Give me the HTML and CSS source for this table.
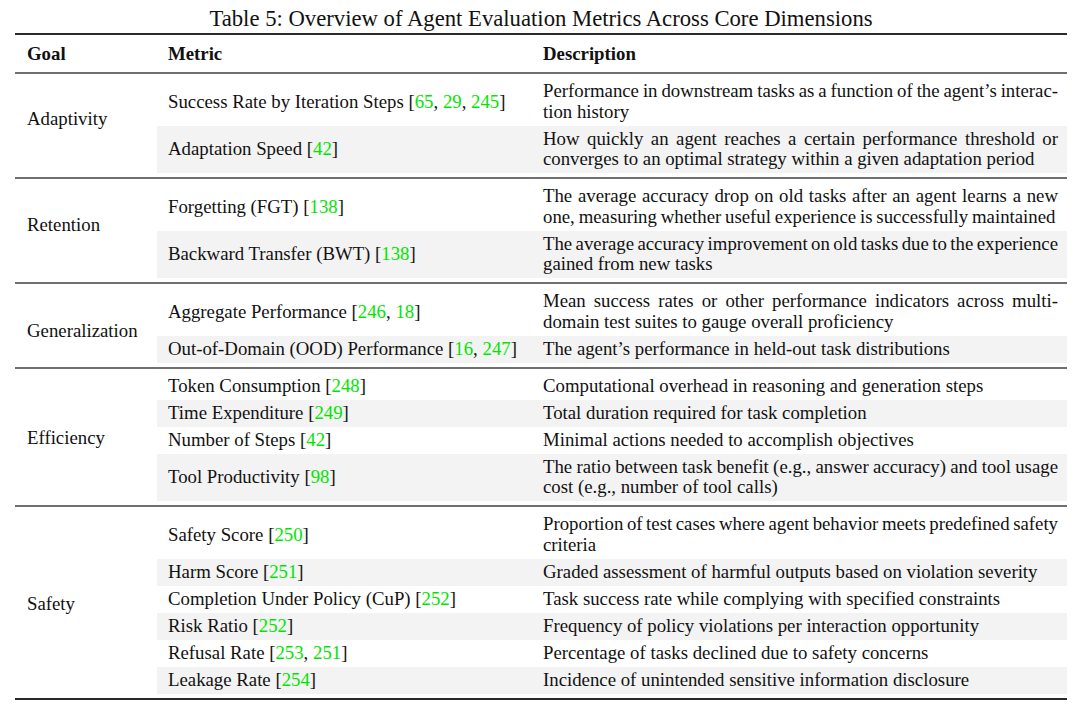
FILE: index.html
```html
<!DOCTYPE html>
<html lang="en">
<head>
<meta charset="utf-8">
<title>Table 5</title>
<link rel="stylesheet" href="styles.css">
</head>
<body>
<div class="page">
  <div class="caption">Table 5: Overview of Agent Evaluation Metrics Across Core Dimensions</div>
  <div class="table">
    <div class="head">
      <div class="goal">Goal</div>
      <div class="metric">Metric</div>
      <div class="desc">Description</div>
    </div>

    <div class="group">
      <div class="goal up7">Adaptivity</div>
      <div class="rows">
        <div class="r"><div class="metric">Success Rate by Iteration Steps [<span class="cite">65</span>, <span class="cite">29</span>, <span class="cite">245</span>]</div><div class="desc"><span class="j">Performance in downstream tasks as a function of the agent’s interac-</span>tion history</div></div>
        <div class="r alt"><div class="metric">Adaptation Speed [<span class="cite">42</span>]</div><div class="desc"><span class="j">How quickly an agent reaches a certain performance threshold or</span>converges to an optimal strategy within a given adaptation period</div></div>
      </div>
    </div>

    <div class="group">
      <div class="goal up6">Retention</div>
      <div class="rows">
        <div class="r"><div class="metric">Forgetting (FGT) [<span class="cite">138</span>]</div><div class="desc"><span class="j">The average accuracy drop on old tasks after an agent learns a new</span><span class="tight">one, measuring whether useful experience is successfully maintained</span></div></div>
        <div class="r alt"><div class="metric">Backward Transfer (BWT) [<span class="cite">138</span>]</div><div class="desc"><span class="j">The average accuracy improvement on old tasks due to the experience</span>gained from new tasks</div></div>
      </div>
    </div>

    <div class="group">
      <div class="goal down6">Generalization</div>
      <div class="rows">
        <div class="r"><div class="metric">Aggregate Performance [<span class="cite">246</span>, <span class="cite">18</span>]</div><div class="desc"><span class="j">Mean success rates or other performance indicators across multi-</span>domain test suites to gauge overall proficiency</div></div>
        <div class="r alt"><div class="metric">Out-of-Domain (OOD) Performance [<span class="cite">16</span>, <span class="cite">247</span>]</div><div class="desc">The agent’s performance in held-out task distributions</div></div>
      </div>
    </div>

    <div class="group">
      <div class="goal down1">Efficiency</div>
      <div class="rows">
        <div class="r"><div class="metric">Token Consumption [<span class="cite">248</span>]</div><div class="desc">Computational overhead in reasoning and generation steps</div></div>
        <div class="r alt"><div class="metric">Time Expenditure [<span class="cite">249</span>]</div><div class="desc">Total duration required for task completion</div></div>
        <div class="r"><div class="metric">Number of Steps [<span class="cite">42</span>]</div><div class="desc">Minimal actions needed to accomplish objectives</div></div>
        <div class="r alt"><div class="metric">Tool Productivity [<span class="cite">98</span>]</div><div class="desc"><span class="j">The ratio between task benefit (e.g., answer accuracy) and tool usage</span>cost (e.g., number of tool calls)</div></div>
      </div>
    </div>

    <div class="group last">
      <div class="goal down2">Safety</div>
      <div class="rows">
        <div class="r"><div class="metric">Safety Score [<span class="cite">250</span>]</div><div class="desc"><span class="j">Proportion of test cases where agent behavior meets predefined safety</span>criteria</div></div>
        <div class="r alt"><div class="metric">Harm Score [<span class="cite">251</span>]</div><div class="desc">Graded assessment of harmful outputs based on violation severity</div></div>
        <div class="r"><div class="metric">Completion Under Policy (CuP) [<span class="cite">252</span>]</div><div class="desc">Task success rate while complying with specified constraints</div></div>
        <div class="r alt"><div class="metric">Risk Ratio [<span class="cite">252</span>]</div><div class="desc">Frequency of policy violations per interaction opportunity</div></div>
        <div class="r"><div class="metric">Refusal Rate [<span class="cite">253</span>, <span class="cite">251</span>]</div><div class="desc">Percentage of tasks declined due to safety concerns</div></div>
        <div class="r alt"><div class="metric">Leakage Rate [<span class="cite">254</span>]</div><div class="desc">Incidence of unintended sensitive information disclosure</div></div>
      </div>
    </div>
  </div>
</div>
</body>
</html>
```
FILE: styles.css
```css
html, body {
  margin: 0;
  padding: 0;
  background: #ffffff;
}

body {
  font-family: "Liberation Serif", "Times New Roman", serif;
  color: #111111;
  font-size: 18.8px;
}

.page {
  width: 1080px;
  height: 714px;
  overflow: hidden;
}

.caption {
  height: 33px;
  font-size: 22.7px;
  line-height: 38px;
  text-align: center;
  padding-left: 2px;
  box-sizing: border-box;
  white-space: nowrap;
}

.table {
  margin-left: 15px;
  width: 1052px;
  border-top: 2px solid #2a2a2a;
  border-bottom: 2px solid #2a2a2a;
}

.head {
  display: grid;
  grid-template-columns: 142px 375px 1fr;
  height: 37px;
  align-items: center;
  font-weight: bold;
}

.goal {
  padding-left: 12px;
}

.metric,
.desc {
  padding-left: 11px;
}

.desc {
  padding-right: 9px;
}

.metric {
  white-space: nowrap;
}

.group {
  display: flex;
  align-items: center;
  border-top: 2px solid #707070;
  padding: 4px 0;
}

.group > .goal {
  width: 142px;
  flex: none;
  box-sizing: border-box;
}

.goal.up7 { margin-bottom: 14px; }
.goal.up6 { margin-bottom: 12px; }
.goal.down6 { margin-top: 12px; }
.goal.down1 { margin-top: 2px; }
.goal.down2 { margin-top: 4px; }

.rows {
  flex: 1;
  display: flex;
  flex-direction: column;
}

.r {
  display: grid;
  grid-template-columns: 375px 1fr;
  align-items: center;
  line-height: 20.5px;
  padding: 3.25px 0;
}

.r.alt {
  background: #f3f3f3;
}

.j {
  display: block;
  white-space: nowrap;
  text-align: justify;
  text-align-last: justify;
  word-spacing: -2.5px;
}

.tight {
  display: block;
  white-space: nowrap;
  word-spacing: -0.85px;
}

.cite {
  color: #00e600;
}
```
